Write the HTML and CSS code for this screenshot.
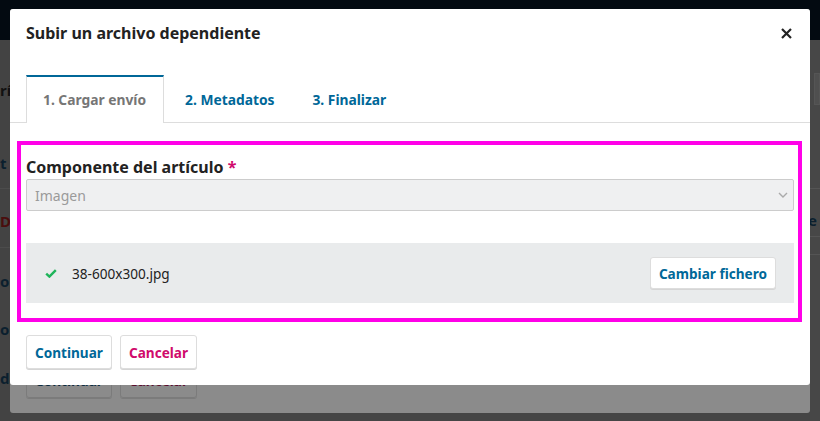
FILE: index.html
```html
<!DOCTYPE html>
<html lang="es">
<head>
<meta charset="utf-8">
<title>Subir un archivo dependiente</title>
<link rel="stylesheet" href="styles.css">
</head>
<body>
<div class="page">
  <div class="topbar"></div>
  <div class="page-main">
    <div class="frag-col frag-left">
      <div class="frag frag-a">rí</div>
      <div class="frag frag-b">t</div>
      <div class="frag frag-c red">D</div>
      <div class="frag frag-d">o y</div>
      <div class="frag frag-e">o</div>
      <div class="frag frag-f">da</div>
    </div>
    <div class="frag-col frag-right">
      <div class="rbox"></div>
      <div class="rline r1"></div>
      <div class="frag rtext">e</div>
      <div class="rline r2"></div>
      <div class="rline r3"></div>
    </div>
  </div>
</div>

<div class="modal-under">
  <div class="under-footer">
    <span class="ghost-btn">Continuar</span>
    <span class="ghost-btn ghost-red">Cancelar</span>
  </div>
</div>

<div class="modal">
  <div class="modal-header">
    <h2 class="modal-title">Subir un archivo dependiente</h2>
    <button class="close" aria-label="Cerrar">
      <svg width="11" height="11" viewBox="0 0 11 11"><path d="M1 1L10 10M10 1L1 10" stroke="#222" stroke-width="2.2" fill="none"/></svg>
    </button>
  </div>
  <div class="tabs">
    <span class="tab active">1. Cargar envío</span>
    <span class="tab">2. Metadatos</span>
    <span class="tab">3. Finalizar</span>
  </div>
  <div class="highlight">
    <label class="field-label">Componente del artículo <span class="req">*</span></label>
    <div class="select">
      <span>Imagen</span>
      <svg width="10" height="6" viewBox="0 0 10 6"><path d="M1 1L5 5L9 1" stroke="#aaa" stroke-width="1.4" fill="none"/></svg>
    </div>
    <div class="file-row">
      <div class="file-info">
        <svg class="check" width="12" height="9" viewBox="0 0 12 9"><path d="M1.2 4.6L4.4 7.6L10.8 1.2" stroke="#1fb45a" stroke-width="2.4" fill="none"/></svg>
        <span class="file-name">38-600x300.jpg</span>
      </div>
      <button class="btn">Cambiar fichero</button>
    </div>
  </div>
  <div class="modal-footer">
    <button class="btn">Continuar</button>
    <button class="btn btn-red">Cancelar</button>
  </div>
</div>
</body>
</html>
```

FILE: styles.css
```css
* { box-sizing: border-box; }
html, body {
  margin: 0;
  width: 820px;
  height: 421px;
  overflow: hidden;
  font-family: "Noto Sans", "Open Sans", sans-serif;
}
body { background: #454545; position: relative; }

.page { display: flex; flex-direction: column; height: 421px; }
.topbar { height: 40px; background: #030a11; }
.page-main { flex: 1; display: flex; justify-content: space-between; }
.frag-col { width: 10px; overflow: hidden; display: flex; flex-direction: column; }
.frag-left { background: #434343; }
.frag-right { background: #474747; }
.frag {
  font-size: 15px;
  font-weight: 700;
  line-height: 20px;
  color: #0b1f2e;
  white-space: nowrap;
}
.frag.red { color: #4a0d0d; }
.frag-a { margin-top: 40px; color: #111; }
.frag-b { margin-top: 53px; padding-bottom: 15px; border-bottom: 1px solid #4c4c4c; }
.frag-c { margin-top: 22px; padding-bottom: 16px; border-bottom: 1px solid #4c4c4c; }
.frag-d { margin-top: 23px; }
.frag-e { margin-top: 28px; }
.frag-f { margin-top: 29px; }

.rbox { margin: 33px 0 0 4px; height: 32px; background: #4f4f4f; border: 1px solid #555; }
.rline { height: 1px; background: #545454; }
.r1 { margin-top: 83px; }
.rtext { margin-top: 21px; margin-left: -2px; }
.r2 { margin-top: 6px; }
.r3 { margin-top: 17px; }

.modal-under {
  position: absolute;
  left: 10px;
  top: 9px;
  width: 800px;
  height: 404px;
  background: #8b8b8b;
  border-radius: 3px;
  display: flex;
  flex-direction: column;
  justify-content: flex-end;
}
.under-footer { display: flex; gap: 8px; padding: 0 16px 15px; }
.ghost-btn {
  display: inline-block;
  height: 34px;
  padding: 0 8px;
  line-height: 32px;
  font-size: 13.6px;
  font-weight: 700;
  color: #0d2c40;
  border: 1px solid #7b7b7b;
  border-radius: 3px;
  box-shadow: 0 1px 0 #7b7b7b;
}
.ghost-red { color: #5a0c2d; }

.modal {
  position: absolute;
  left: 10px;
  top: 9px;
  width: 800px;
  background: #fff;
  border-radius: 3px;
}
.modal-header {
  display: flex;
  justify-content: space-between;
  align-items: center;
  padding: 12px 18px 12px 16px;
}
.modal-title {
  margin: 0;
  font-size: 16px;
  line-height: 24px;
  font-weight: 700;
  color: #222;
}
.close {
  border: 0;
  background: none;
  padding: 0;
  width: 11px;
  height: 11px;
  display: flex;
}

.tabs {
  margin-top: 18px;
  display: flex;
  align-items: flex-end;
  padding-left: 16px;
  border-bottom: 1px solid #ddd;
}
.tab {
  margin-right: 4px;
  padding: 12px 16px;
  border: 1px solid transparent;
  border-top: 2px solid transparent;
  border-bottom: 0;
  font-size: 13.8px;
  line-height: 21px;
  font-weight: 700;
  color: #006798;
}
.tab.active {
  color: #767676;
  border-color: #ddd;
  border-top-color: #006798;
  background: #fff;
  margin-bottom: -1px;
  padding-bottom: 13px;
  padding-right: 17px;
}

.highlight {
  margin: 18px 8px 0 7px;
  border: 4px solid #ff00e8;
  padding: 10px 4px 15px 5px;
}
.field-label {
  display: block;
  font-size: 16px;
  line-height: 24px;
  font-weight: 700;
  color: #222;
}
.req { color: #d00a6c; }
.select {
  height: 32px;
  display: flex;
  align-items: center;
  justify-content: space-between;
  padding: 0 5px 0 8px;
  background: #eff0f1;
  border: 1px solid #ccc;
  border-radius: 2px;
  font-size: 14px;
  color: #9a9a9a;
}
.file-row {
  margin-top: 32px;
  height: 60px;
  background: #e9ebec;
  display: flex;
  align-items: center;
  justify-content: space-between;
  padding: 0 18px 0 19px;
}
.file-info { display: flex; align-items: center; gap: 15px; }
.check { margin-top: 1px; }
.file-name { font-size: 13.6px; color: #222; }

.btn {
  height: 32px;
  padding: 0 8px;
  background: #fff;
  border: 1px solid #ddd;
  border-radius: 3px;
  box-shadow: 0 1px 0 #d5d5d5;
  font-family: "Noto Sans", "Open Sans", sans-serif;
  font-size: 13.6px;
  font-weight: 700;
  color: #006798;
  cursor: pointer;
}
.btn-red { color: #d00a6c; }
.modal-footer {
  display: flex;
  gap: 8px;
  padding: 13px 16px 16px;
}
.modal-footer .btn { height: 34px; }
```
